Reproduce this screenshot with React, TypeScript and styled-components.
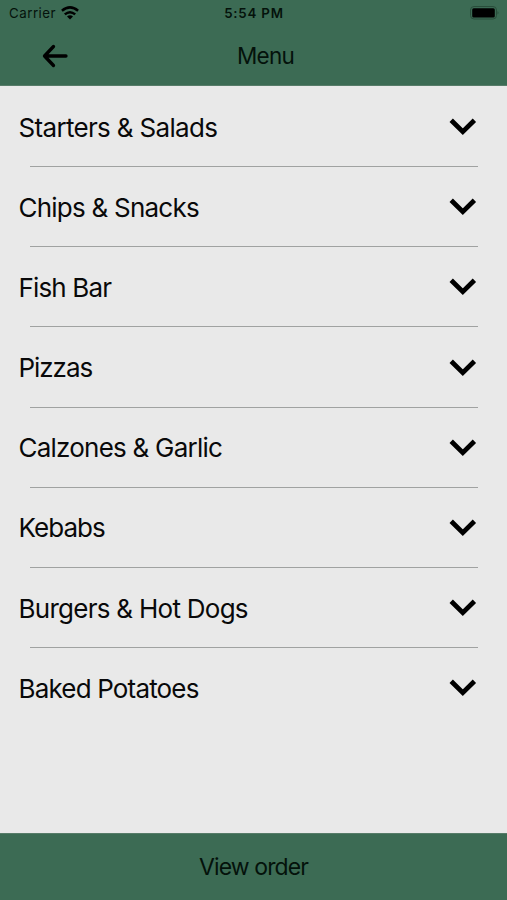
import React from "react";
import styled, { createGlobalStyle } from "styled-components";

const GlobalStyle = createGlobalStyle`
  * { box-sizing: border-box; }
  body { margin: 0; font-family: Inter, "Liberation Sans", sans-serif; color: #09090a; }
`;

const Screen = styled.main`
  display: flex;
  flex-direction: column;
  width: 507px;
  height: 900px;
  background: #e9e9e9;
`;

const Header = styled.header`
  height: 86px;
  background: #3c6b54;
  border-bottom: 1px solid #577c69;
  color: #04120b;
`;

const StatusBar = styled.div`
  display: grid;
  grid-template-columns: 1fr 1fr 1fr;
  align-items: center;
  height: 26px;
  padding: 0 8px 0 9px;
  font-size: 13.3px;
`;

const Carrier = styled.div`
  display: flex;
  align-items: center;
  gap: 5px;
  letter-spacing: 0.5px;
`;

const Clock = styled.time`
  font-weight: 600;
  letter-spacing: 0.8px;
  text-align: center;
`;

const Battery = styled.svg`
  justify-self: end;
`;

const NavBar = styled.div`
  display: grid;
  grid-template-columns: 78px 1fr 54px;
  align-items: center;
  height: 60px;
`;

const BackButton = styled.button`
  display: flex;
  padding: 0;
  margin-left: 41px;
  border: 0;
  background: none;
  color: #000;
`;

const Title = styled.h1`
  margin: 0;
  padding-bottom: 1px;
  font-size: 22.5px;
  font-weight: 400;
  letter-spacing: -0.8px;
  line-height: 26px;
  text-align: center;
`;

const MenuList = styled.ul`
  flex: 1;
  margin: 0;
  padding: 0;
  list-style: none;
`;

const MenuItem = styled.li`
  height: 80.2px;
  &:not(:last-child)::after {
    content: "";
    display: block;
    height: 1px;
    margin: 0 29px 0 30px;
    background: #a0a2a1;
  }
`;

const MenuButton = styled.button`
  display: flex;
  align-items: center;
  justify-content: space-between;
  width: 100%;
  height: 80px;
  padding: 2px 30px 0 18.5px;
  border: 0;
  background: none;
  color: inherit;
  font: inherit;
`;

const Label = styled.span<{ $tracking: number }>`
  font-size: 26px;
  letter-spacing: ${({ $tracking }) => $tracking}px;
  white-space: nowrap;
`;

const OrderButton = styled.button`
  height: 67px;
  padding: 0;
  border: 0;
  border-top: 1px solid #577c69;
  background: #3c6b54;
  color: #04120b;
  font: 400 23px Inter, "Liberation Sans", sans-serif;
  letter-spacing: -0.9px;
`;

const items = [
  { name: "Starters & Salads", tracking: -0.67 },
  { name: "Chips & Snacks", tracking: -0.77 },
  { name: "Fish Bar", tracking: -0.85 },
  { name: "Pizzas", tracking: -1.05 },
  { name: "Calzones & Garlic", tracking: -0.77 },
  { name: "Kebabs", tracking: -0.95 },
  { name: "Burgers & Hot Dogs", tracking: -0.73 },
  { name: "Baked Potatoes", tracking: -0.83 },
];

export default function App() {
  return (
    <Screen>
      <GlobalStyle />
      <Header>
        <StatusBar>
          <Carrier>
            Carrier
            <svg width="18" height="14" viewBox="0 0 18 14" fill="none" stroke="#000" strokeWidth="2.5">
              <path d="M.9 4.8Q9-2 17.1 4.8M3.8 8.4Q9 4 14.2 8.4" />
              <path d="M6 10.5 9 13.6l3-3.1Q9 8.1 6 10.5Z" fill="#000" stroke="none" />
            </svg>
          </Carrier>
          <Clock>5:54 PM</Clock>
          <Battery width="29" height="14" viewBox="0 0 29 14">
            <rect x=".5" y=".5" width="26" height="12.5" rx="3.5" fill="none" stroke="#294e3b" />
            <rect x="2.2" y="2.2" width="22.6" height="9.2" rx="1.5" />
            <path d="M27.5 5v3.5q2-1.75 0-3.5" fill="#294e3b" />
          </Battery>
        </StatusBar>
        <NavBar>
          <BackButton aria-label="Back">
            <svg width="28" height="24" viewBox="0 0 28 24" fill="none" stroke="currentColor" strokeWidth="3.3" strokeLinecap="round" strokeLinejoin="round">
              <path d="M25 12H3.5M12.5 2.5 3.5 12l9 9.5" />
            </svg>
          </BackButton>
          <Title>Menu</Title>
        </NavBar>
      </Header>
      <MenuList>
        {items.map(({ name, tracking }) => (
          <MenuItem key={name}>
            <MenuButton>
              <Label $tracking={tracking}>{name}</Label>
              <svg width="28" height="18" viewBox="0 0 28 18" fill="none" stroke="#000" strokeWidth="4.8">
                <path d="M2.2 2.3 13.8 13.7 25.4 2.3" />
              </svg>
            </MenuButton>
          </MenuItem>
        ))}
      </MenuList>
      <OrderButton>View order</OrderButton>
    </Screen>
  );
}
